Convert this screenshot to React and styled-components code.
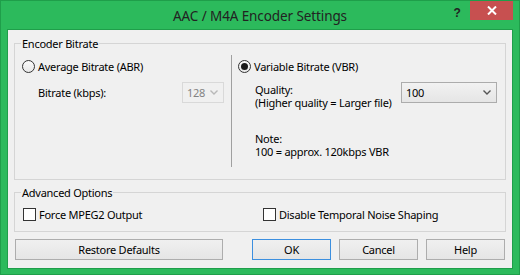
import React from "react";
import styled, { createGlobalStyle } from "styled-components";

const GREEN = "#2cba5c";
const GREEN_DARK = "#1f9e4a";
const FONT = `"Segoe UI", "Noto Sans", "Liberation Sans", sans-serif`;

const Global = createGlobalStyle`
  html, body { margin: 0; padding: 0; background: ${GREEN}; }
  * { box-sizing: border-box; }
`;

const Window = styled.div`
  width: 520px;
  height: 275px;
  background: ${GREEN};
  border: 1px solid ${GREEN_DARK};
  padding: 0 6px 5px 6px;
  display: flex;
  flex-direction: column;
  font-family: ${FONT};
  font-size: 11px;
  letter-spacing: -0.25px;
  color: #000;
  white-space: nowrap;
`;

const TitleBar = styled.div`
  height: 28px;
  display: grid;
  grid-template-columns: 1fr auto 1fr;
  align-items: start;
`;

const Title = styled.div`
  grid-column: 2;
  font-size: 13.5px;
  letter-spacing: -0.1px;
  line-height: 28px;
  color: #222;
  padding-top: 1px;
`;

const Controls = styled.div`
  grid-column: 3;
  justify-self: end;
  display: flex;
  align-items: flex-start;
`;

const HelpGlyph = styled.div`
  width: 26px;
  height: 19px;
  display: flex;
  align-items: center;
  justify-content: center;
  font-family: "Liberation Sans", sans-serif;
  font-weight: bold;
  font-size: 12px;
  color: #222;
  padding-top: 4px;
`;

const CloseButton = styled.div`
  width: 43px;
  height: 19px;
  background: #c75050;
  display: flex;
  align-items: center;
  justify-content: center;
`;

const Client = styled.div`
  flex: 1;
  background: #f0f0f0;
  border: 1px solid ${GREEN_DARK};
  padding: 13px 6px 0 6px;
  display: flex;
  flex-direction: column;
`;

const Group = styled.div`
  position: relative;
  border: 1px solid #d5d5d5;
  height: ${(p) => p.$h}px;
  margin-top: ${(p) => p.$mt || 0}px;
`;

const Legend = styled.span`
  position: absolute;
  top: -8px;
  left: 6px;
  padding: 0 1px;
  background: #f0f0f0;
  line-height: 16px;
`;

const EncoderBody = styled.div`
  display: grid;
  grid-template-columns: 216px 1px 1fr;
  padding-top: 11px;
`;

const Separator = styled.div`
  width: 1px;
  height: 112px;
  background: #a0a0a0;
`;

const Column = styled.div`
  display: flex;
  flex-direction: column;
  padding-left: ${(p) => p.$pl}px;
`;

const OptionRow = styled.label`
  display: flex;
  align-items: center;
  gap: 3px;
  height: 13px;
  margin-top: 5px;
  line-height: 13px;
`;

const RadioCircle = styled.span`
  width: 13px;
  height: 13px;
  border-radius: 50%;
  border: 1px solid #333;
  background: linear-gradient(#fafafa, #e8e8e8);
  display: flex;
  align-items: center;
  justify-content: center;
  flex: none;
  &::after {
    content: "";
    width: 7px;
    height: 7px;
    border-radius: 50%;
    background: #1a1a1a;
    display: ${(p) => (p.$checked ? "block" : "none")};
  }
`;

const CheckBox = styled.span`
  width: 13px;
  height: 13px;
  border: 1px solid #333;
  background: #fff;
  flex: none;
`;

const FieldRow = styled.div`
  display: flex;
  align-items: center;
  justify-content: space-between;
  margin-top: 9px;
  padding-left: 16px;
  padding-right: 7px;
`;

const Combo = styled.div`
  width: ${(p) => p.$w}px;
  height: 21px;
  border: 1px solid ${(p) => (p.$disabled ? "#d9d9d9" : "#acacac")};
  background: ${(p) =>
    p.$disabled ? "#f0f0f0" : "linear-gradient(#f2f2f2, #e5e5e5)"};
  color: ${(p) => (p.$disabled ? "#838383" : "#000")};
  display: flex;
  align-items: center;
  justify-content: space-between;
  padding: 0 5px 0 4px;
`;

const QualityRow = styled.div`
  display: grid;
  grid-template-columns: 146px 96px;
  margin-top: 9px;
  padding-left: 17px;
`;

const TextBlock = styled.div`
  line-height: 13px;
  padding-top: 1px;
  margin-top: ${(p) => p.$mt || 0}px;
  padding-left: ${(p) => p.$pl || 0}px;
`;

const AdvancedBody = styled.div`
  display: grid;
  grid-template-columns: 240px 1fr;
  padding: 15px 0 0 8px;
`;

const CheckRow = styled.label`
  display: flex;
  align-items: center;
  gap: 3px;
  height: 13px;
  line-height: 13px;
`;

const ButtonRow = styled.div`
  display: flex;
  gap: 8px;
  margin-top: 7px;
  padding: 0 1px;
`;

const Spacer = styled.div`
  flex: 1;
`;

const Button = styled.button`
  width: ${(p) => p.$w}px;
  height: 21px;
  font-family: ${FONT};
  font-size: 11px;
  letter-spacing: -0.25px;
  color: #000;
  border: 1px solid ${(p) => (p.$default ? "#3c8fdf" : "#adadad")};
  background: linear-gradient(#f0f0f0, #e5e5e5);
  padding: 0;
  display: flex;
  align-items: center;
  justify-content: center;
`;

const Chevron = ({ color }) => (
  <svg width="8" height="5" viewBox="0 0 8 5">
    <path d="M0.5 0.5 L4 4 L7.5 0.5" fill="none" stroke={color} strokeWidth="1.4" />
  </svg>
);

export default function App() {
  return (
    <>
      <Global />
      <Window>
        <TitleBar>
          <Title>AAC / M4A Encoder Settings</Title>
          <Controls>
            <HelpGlyph>?</HelpGlyph>
            <CloseButton>
              <svg width="10" height="9" viewBox="0 0 10 9">
                <path d="M1 0.5 L9 8.5 M9 0.5 L1 8.5" stroke="#fff" strokeWidth="2" />
              </svg>
            </CloseButton>
          </Controls>
        </TitleBar>
        <Client>
          <Group $h={137}>
            <Legend>Encoder Bitrate</Legend>
            <EncoderBody>
              <Column $pl={7}>
                <OptionRow>
                  <RadioCircle />
                  Average Bitrate (ABR)
                </OptionRow>
                <FieldRow>
                  <span>Bitrate (kbps):</span>
                  <Combo $w={42} $disabled>
                    <span>128</span>
                    <Chevron color="#b8b8b8" />
                  </Combo>
                </FieldRow>
              </Column>
              <Separator />
              <Column $pl={6}>
                <OptionRow>
                  <RadioCircle $checked />
                  Variable Bitrate (VBR)
                </OptionRow>
                <QualityRow>
                  <TextBlock>
                    Quality:
                    <br />
                    (Higher quality = Larger file)
                  </TextBlock>
                  <Combo $w={96}>
                    <span>100</span>
                    <Chevron color="#555" />
                  </Combo>
                </QualityRow>
                <TextBlock $mt={22} $pl={17}>
                  Note:
                  <br />
                  100 = approx. 120kbps VBR
                </TextBlock>
              </Column>
            </EncoderBody>
          </Group>
          <Group $h={40} $mt={12}>
            <Legend>Advanced Options</Legend>
            <AdvancedBody>
              <CheckRow>
                <CheckBox />
                Force MPEG2 Output
              </CheckRow>
              <CheckRow>
                <CheckBox />
                Disable Temporal Noise Shaping
              </CheckRow>
            </AdvancedBody>
          </Group>
          <ButtonRow>
            <Button $w={208}>Restore Defaults</Button>
            <Spacer />
            <Button $w={79} $default>OK</Button>
            <Button $w={79}>Cancel</Button>
            <Button $w={79}>Help</Button>
          </ButtonRow>
        </Client>
      </Window>
    </>
  );
}
